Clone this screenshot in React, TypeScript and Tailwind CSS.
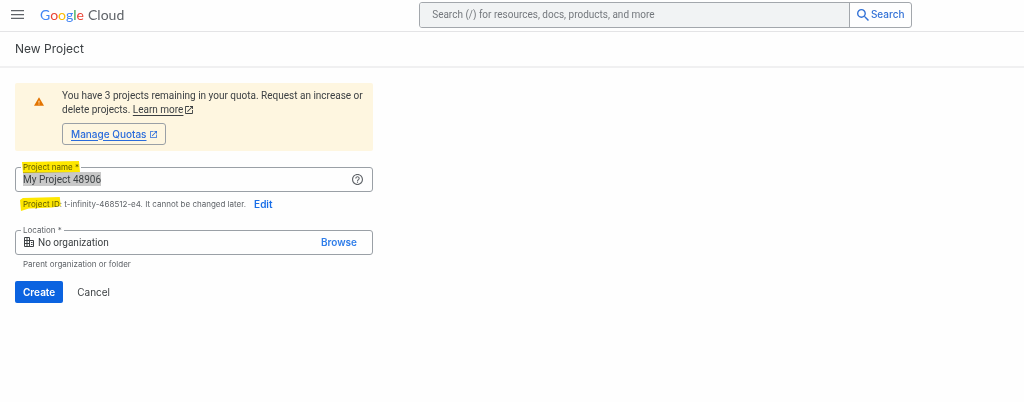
import { FC, ReactNode } from "react";

interface OutlinedFieldProps {
    id: string;
    label: string;
    highlighted?: boolean;
    children: ReactNode;
}

interface IconProps {
    className?: string;
}

const LOGO_LETTERS = [
    { letter: "G", color: "text-[#4285f4]" },
    { letter: "o", color: "text-[#ea4335]" },
    { letter: "o", color: "text-[#fbbc04]" },
    { letter: "g", color: "text-[#4285f4]" },
    { letter: "l", color: "text-[#34a853]" },
    { letter: "e", color: "text-[#ea4335]" },
];

const MenuIcon: FC = () => (
    <svg viewBox="0 0 13 9" className="h-[9px] w-[13px]" fill="#5f6368" aria-hidden="true">
        <path d="M0 0h13v1.3H0zM0 3.9h13v1.3H0zM0 7.7h13V9H0z" />
    </svg>
);

const SearchIcon: FC = () => (
    <svg viewBox="3 3 17.5 17.5" className="size-3 shrink-0" fill="currentColor" aria-hidden="true">
        <path d="M15.5 14h-.79l-.28-.27A6.47 6.47 0 0 0 16 9.5 6.5 6.5 0 1 0 9.5 16c1.61 0 3.09-.59 4.23-1.57l.27.28v.79l5 4.99L20.49 19l-4.99-5zm-6 0C7.01 14 5 11.99 5 9.5S7.01 5 9.5 5 14 7.01 14 9.5 11.99 14 9.5 14z" />
    </svg>
);

const ExternalIcon: FC<IconProps> = ({ className }) => (
    <svg viewBox="3 3 18 18" className={className} fill="currentColor" aria-hidden="true">
        <path d="M19 19H5V5h7V3H5a2 2 0 0 0-2 2v14a2 2 0 0 0 2 2h14c1.1 0 2-.9 2-2v-7h-2v7zM14 3v2h3.59l-9.83 9.83 1.41 1.41L19 6.41V10h2V3h-7z" />
    </svg>
);

const WarningIcon: FC = () => (
    <svg viewBox="1 2 22 19" className="h-[9px] w-[10px]" fill="#e37400" aria-hidden="true">
        <path d="M1 21h22L12 2 1 21zm12-3h-2v-2h2v2zm0-4h-2v-4h2v4z" />
    </svg>
);

const HelpIcon: FC = () => (
    <svg viewBox="2 2 20 20" className="size-[11px]" fill="#5f6368" aria-hidden="true">
        <path d="M11 18h2v-2h-2v2zm1-16C6.48 2 2 6.48 2 12s4.48 10 10 10 10-4.48 10-10S17.52 2 12 2zm0 18c-4.41 0-8-3.59-8-8s3.59-8 8-8 8 3.59 8 8-3.59 8-8 8zm0-14c-2.21 0-4 1.79-4 4h2c0-1.1.9-2 2-2s2 .9 2 2c0 2-3 1.75-3 5h2c0-2.25 3-2.5 3-5 0-2.21-1.79-4-4-4z" />
    </svg>
);

const OrganizationIcon: FC = () => (
    <svg viewBox="0 0 10 10" className="size-[10px] shrink-0" fill="none" stroke="#3c4043" aria-hidden="true">
        <path d="M.5 .5h5v9h-5zM3 .5v9M.5 3.5h5M.5 6.5h5M5.5 3.5h4v6h-4M7 5.5h1.500M7 7.5h1.500" />
    </svg>
);

const OutlinedField: FC<OutlinedFieldProps> = ({ id, label, highlighted, children }) => (
    <fieldset className="min-w-0 rounded-[3px] border border-[#9aa0a6] px-1">
        <legend className="ml-px px-[2px] font-[Inter,sans-serif] text-[8px] leading-[10px] text-[#5f6368]">
            <span className="relative inline-block">
                <label htmlFor={id}>{label}</label>
                {highlighted && (
                    <svg
                        viewBox="0 0 58 12"
                        preserveAspectRatio="none"
                        className="pointer-events-none absolute -inset-x-px -top-px h-3 w-[calc(100%+2px)] mix-blend-multiply"
                        fill="#ffe800"
                        aria-hidden="true"
                    >
                        <path d="M0 1 57 0l1 11-57 1z" />
                    </svg>
                )}
            </span>
        </legend>
        <div className="flex h-[19px] items-start px-[3px]">{children}</div>
    </fieldset>
);

export default function App() {
    return (
        <div className="min-h-screen bg-[#fefefe] font-[Roboto,sans-serif] text-[10px] text-[#3c4043]">
            <header className="flex h-8 items-center gap-[3px] border-b border-[#e4e4e6] pb-[2px] pl-[11px]">
                <div className="flex w-2/5 shrink-0 items-center gap-4">
                    <button type="button" aria-label="Main menu">
                        <MenuIcon />
                    </button>
                    <a
                        href="#home"
                        className="flex gap-1 font-[Lato,sans-serif] text-sm leading-4 text-[#5f6368]"
                    >
                        <span>
                            {LOGO_LETTERS.map(({ letter, color }, index) => (
                                <span key={index} className={color}>
                                    {letter}
                                </span>
                            ))}
                        </span>
                        <span>Cloud</span>
                    </a>
                </div>
                <form className="flex h-[26px] w-full max-w-[493px] rounded-[3px] border border-[#a3a7ac]">
                    <input
                        type="search"
                        aria-label="Search"
                        placeholder="Search (/) for resources, docs, products, and more"
                        className="min-w-0 flex-1 rounded-l-[2px] bg-[#f1f3f4] px-3 placeholder:text-[#74787d]"
                    />
                    <button
                        type="button"
                        className="flex w-[62px] items-center justify-center gap-[2px] border-l border-[#a3a7ac] font-[Inter,sans-serif] font-medium text-[#3271d6]"
                    >
                        <SearchIcon />
                        Search
                    </button>
                </form>
            </header>

            <div className="border-b-2 border-[#f0f0f1] px-[15px] py-2">
                <h1 className="font-[Inter,sans-serif] text-xs leading-[18px]">New Project</h1>
            </div>

            <main className="max-w-[388px] px-[15px] pt-[15px]">
                {/* Quota notice */}
                <section className="flex rounded-[2px] bg-[#fef6e0] py-[6px]">
                    <div className="w-[47px] shrink-0 pl-[19px] pt-2">
                        <WarningIcon />
                    </div>
                    <div>
                        <p className="leading-[14px]">
                            You have 3 projects remaining in your quota. Request an increase or delete
                            projects.{" "}
                            <a href="#learn-more" className="whitespace-nowrap">
                                <span className="underline underline-offset-2">Learn more</span>
                                <ExternalIcon className="ml-[2px] inline size-2 align-[-1px]" />
                            </a>
                        </p>
                        <a
                            href="#quotas"
                            className="mt-[6px] inline-flex h-[22px] items-center gap-[3px] rounded-[3px] border border-[#9aa0a6] px-2 font-[Inter,sans-serif] font-medium text-[#2a6bdb]"
                        >
                            <span className="underline underline-offset-2">Manage Quotas</span>
                            <ExternalIcon className="size-[7px]" />
                        </a>
                    </div>
                </section>

                <form>
                    {/* Project name */}
                    <div className="mt-[11px]">
                        <OutlinedField id="project-name" label="Project name *" highlighted>
                            <input
                                id="project-name"
                                type="text"
                                defaultValue="My Project 48906"
                                className="h-[14px] max-w-full bg-[#c8c8c8] [field-sizing:content]"
                            />
                            <button type="button" aria-label="Help" className="ml-auto mr-[2px] mt-[2px]">
                                <HelpIcon />
                            </button>
                        </OutlinedField>
                    </div>
                    <div className="mt-[6px] flex items-center gap-2 px-2 font-[Inter,sans-serif] text-[8px] leading-3 text-[#5f6368]">
                        <p>
                            <span className="relative inline-block">
                                Project ID
                                <svg
                                    viewBox="0 0 42 14"
                                    preserveAspectRatio="none"
                                    className="pointer-events-none absolute -left-[3px] -top-px h-[14px] w-[calc(100%+4px)] mix-blend-multiply"
                                    fill="#ffe800"
                                    aria-hidden="true"
                                >
                                    <path d="M0 3 3 1l38-1 1 9-9 1.500-24 1L1 14z" />
                                </svg>
                            </span>
                            : t-infinity-468512-e4. It cannot be changed later.
                        </p>
                        <button type="button" className="text-[10px] font-semibold text-[#1a6fe8]">
                            Edit
                        </button>
                    </div>

                    {/* Location */}
                    <div className="mt-[15px]">
                        <OutlinedField id="location" label="Location *">
                            <div className="flex min-w-0 flex-1 items-center gap-1 pl-px">
                                <OrganizationIcon />
                                <input
                                    id="location"
                                    type="text"
                                    readOnly
                                    defaultValue="No organization"
                                    className="h-[14px] min-w-0 flex-1"
                                />
                            </div>
                            <button
                                type="button"
                                className="mr-2 h-[14px] font-[Inter,sans-serif] font-semibold text-[#2f7de9]"
                            >
                                Browse
                            </button>
                        </OutlinedField>
                    </div>
                    <p className="mt-[3px] px-2 font-[Inter,sans-serif] text-[8px] leading-3 text-[#5f6368]">
                        Parent organization or folder
                    </p>

                    <div className="mt-[11px] flex gap-[6px] font-[Inter,sans-serif]">
                        <button
                            type="button"
                            className="h-[22px] rounded-[2px] bg-[#0b63e0] px-2 font-semibold text-white"
                        >
                            Create
                        </button>
                        <button type="button" className="h-[22px] px-2">
                            Cancel
                        </button>
                    </div>
                </form>
            </main>
        </div>
    );
}
